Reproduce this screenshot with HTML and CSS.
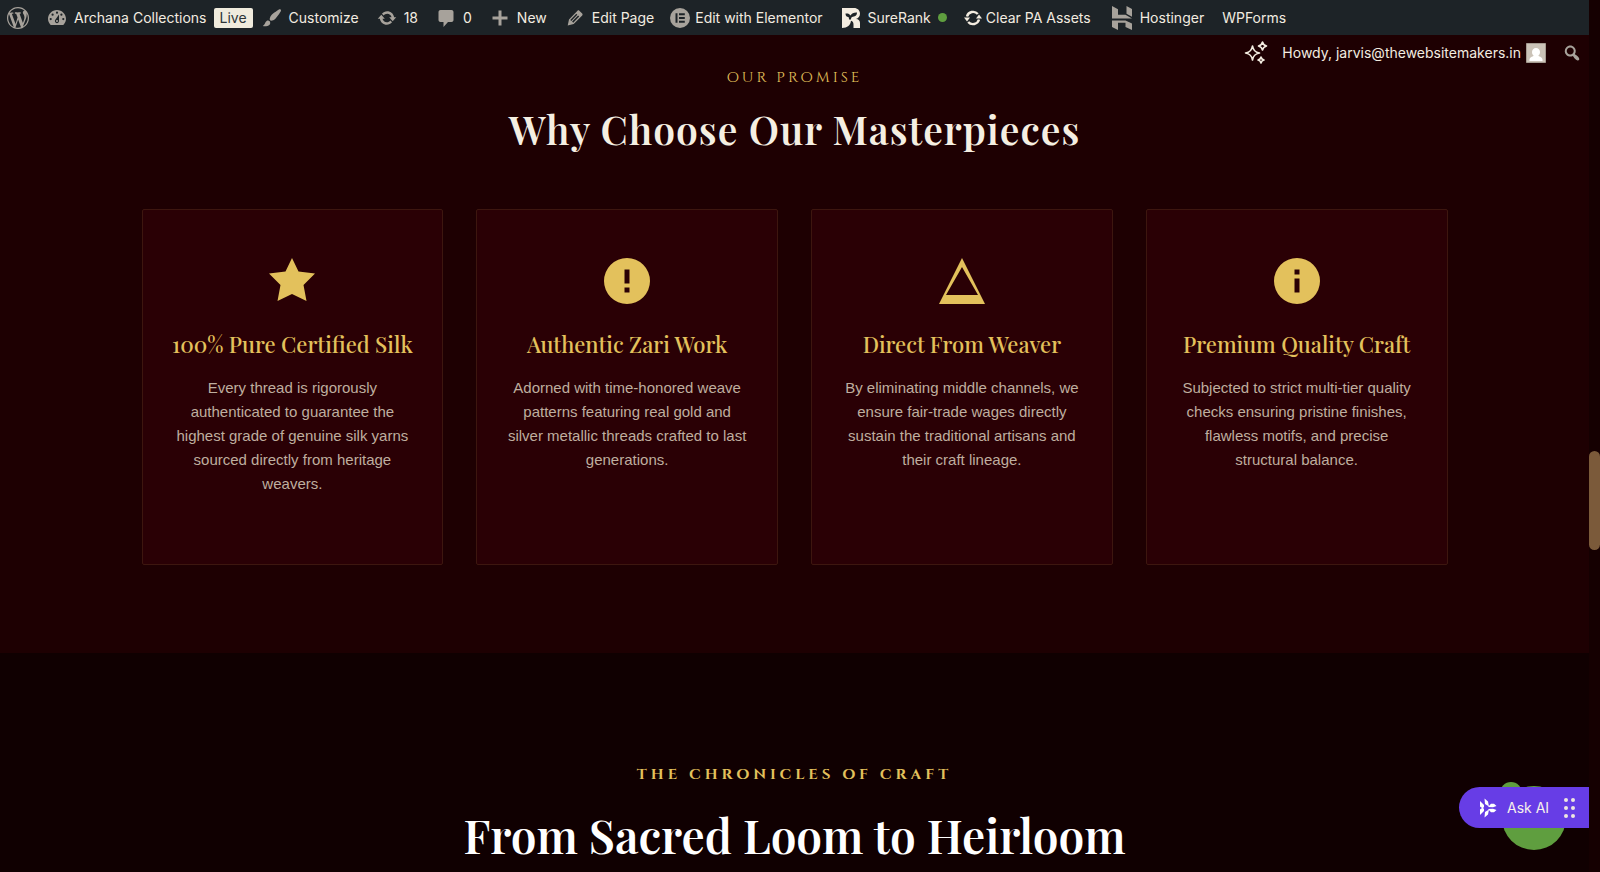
FILE: index.html
```html
<!DOCTYPE html>
<html lang="en">
<head>
    <meta charset="UTF-8">
    <meta name="viewport" content="width=device-width, initial-scale=1.0">
    <title>Archana Collections</title>
    <link rel="stylesheet" href="styles.css">
</head>
<body>

<header class="adminbar">
    <nav class="adminbar-main">
        <a href="#" class="wp-logo" aria-label="About WordPress"><svg class="icon icon-wp" viewBox="0 0 20 20"><path d="M20 10c0-5.51-4.49-10-10-10C4.48 0 0 4.49 0 10c0 5.52 4.48 10 10 10 5.51 0 10-4.48 10-10zM7.78 15.37L4.37 6.22c.55-.02 1.17-.08 1.17-.08.5-.06.44-1.13-.06-1.11 0 0-1.45.11-2.37.11-.18 0-.37 0-.58-.01C4.12 2.69 6.87 1.11 10 1.11c2.33 0 4.45.87 6.05 2.34-.68-.11-1.65.39-1.65 1.58 0 .74.45 1.36.9 2.1.35.61.55 1.36.55 2.46 0 1.49-1.4 5-1.4 5l-3.03-8.37c.54-.02.82-.17.82-.17.5-.05.44-1.25-.06-1.22 0 0-1.44.12-2.38.12-.87 0-2.33-.12-2.33-.12-.5-.03-.56 1.2-.06 1.22l.92.08 1.26 3.41zM17.41 10c.24-.64.74-1.87.43-4.25.7 1.29 1.05 2.71 1.05 4.25 0 3.29-1.73 6.24-4.4 7.78.97-2.59 1.94-5.2 2.92-7.78zM6.1 18.09C3.12 16.65 1.11 13.53 1.11 10c0-1.3.23-2.48.72-3.59C3.25 10.3 4.67 14.2 6.1 18.09zm4.03-6.63l2.58 6.98c-.86.29-1.76.45-2.71.45-.79 0-1.57-.11-2.29-.33.81-2.38 1.62-4.74 2.42-7.1z"/></svg></a>
        <a href="#" class="site-name"><svg class="icon" viewBox="0 0 20 20"><path fill-rule="evenodd" d="M3.76 17h12.48C17.34 15.6 19 13.9 19 11c0-5-4-9-9-9s-9 4-9 9c0 2.9 1.66 4.6 2.76 6zM10 3.6a1.1 1.1 0 1 1 0 2.2 1.1 1.1 0 0 1 0-2.2zM5.6 5.6a1.1 1.1 0 1 1 0 2.2 1.1 1.1 0 0 1 0-2.2zm8.8 0a1.1 1.1 0 1 1 0 2.2 1.1 1.1 0 0 1 0-2.2zM8.5 11.5L12 6.5v6.6c0 1.2-.9 2.2-2 2.2s-2.1-1-2.1-2.2c0-.6.2-1.2.6-1.6zM3.7 10a1.1 1.1 0 1 1 0 2.2 1.1 1.1 0 0 1 0-2.2zm12.6 0a1.1 1.1 0 1 1 0 2.2 1.1 1.1 0 0 1 0-2.2zM11 13a1 1 0 1 0-2 0 1 1 0 0 0 2 0z"/></svg>Archana Collections<span class="badge-live">Live</span></a>
        <a href="#"><svg class="icon" viewBox="0 0 20 20"><path d="M18.93 2.97s.27-.8-.31-1.36c-.53-.52-1.22-.24-1.22-.24-.61.3-6.36 4.07-8.27 6.17-.86.96-2.06 3.79-1.09 4.82.92.98 3.96-.17 4.79-1 2.06-2.06 5.81-7.77 6.1-8.39zM.8 18.05c2.37-1.56 2.06-3.81 3.83-5.04.93-.65 2.22-.62 3.08.29.63.67.8 2.57-.16 3.46-1.57 1.45-4.6 1.95-6.75 1.29z"/></svg>Customize</a>
        <a href="#"><svg class="icon" viewBox="0 0 20 20"><path d="M10.2 3.28c3.53 0 6.43 2.61 6.92 6h2.08l-3.5 4-3.5-4h2.32c-.45-1.97-2.21-3.45-4.32-3.45-1.45 0-2.73.71-3.54 1.78L4.95 5.66C6.23 4.2 8.11 3.28 10.2 3.28zm-.4 13.44c-3.52 0-6.43-2.61-6.92-6H.8l3.5-4c1.17 1.33 2.33 2.67 3.5 4H5.48c.45 1.97 2.21 3.45 4.32 3.45 1.45 0 2.73-.71 3.54-1.78l1.71 1.95c-1.28 1.46-3.15 2.38-5.25 2.38z"/></svg>18</a>
        <a href="#"><svg class="icon" viewBox="0 0 20 20"><path d="M4.500 2h11c1.100 0 2 .9 2 2v8c0 1.100-.9 2-2 2h-3.500l-4.500 5v-5H4.500c-1.100 0-2-.9-2-2V4c0-1.100.9-2 2-2z"/></svg>0</a>
        <a href="#"><svg class="icon" viewBox="0 0 20 20"><path d="M17.500 8.500v3h-6v6h-3v-6h-6v-3h6v-6h3v6z"/></svg>New</a>
        <a href="#"><svg class="icon" viewBox="0 0 20 20"><path d="M14.300 2.700l2.900 2.900c.5.5.5 1.300 0 1.800l-8.500 8.700-6 1.400 1.300-6.100 8.500-8.700c.4-.4 1.300-.5 1.800 0zm-3 3.100l-6 6.100 1 1 6-6.100zm-3.100 8.900l6-6.100-1.100-1.100-6 6.100z"/></svg>Edit Page</a>
        <a href="#" class="elementor"><svg class="icon" viewBox="0 0 20 20"><path fill-rule="evenodd" d="M10 0a10 10 0 1 1 0 20 10 10 0 0 1 0-20zM5.500 5.200v9.600h2V5.200zM9 5.200v2h5.800v-2zM9 9v2h5.800V9zM9 12.800v2h5.800v-2z"/></svg>Edit with Elementor</a>
        <a href="#"><svg class="icon icon-light" viewBox="0 0 20 20"><path fill-rule="evenodd" d="M1 0h12c3.500 0 6 2.400 6 5.700 0 2.600-1.600 4.600-4 5.300 2.600 0 4 1.800 4 4v5h-6.500v-3.500c0-2-.8-3.200-2.500-3.700-.5 4.200-3.500 7.200-9 7.200zM8 11.500h2c0-1.700.6-2.500 2-2.700 2.700-.3 4-1.800 4-4.300-3-.2-5.300.7-6.500 3C8.600 5.800 6.900 5.200 4.500 5.500c0 2.300 1.200 3.500 3.200 3.700.3.800.3 1.500.3 2.300z"/></svg>SureRank<span class="status-dot"></span></a>
        <a href="#" class="clear-assets"><svg class="icon icon-light" viewBox="0 0 20 20"><path fill="none" stroke="currentColor" stroke-width="2.400" d="M4 8.500A6.300 6.300 0 0 1 14.800 6M16 11.500A6.300 6.300 0 0 1 5.200 14"/><path d="M19 10.500h-6l3-4zM1 9.500h6l-3 4z"/></svg>Clear PA Assets</a>
        <a href="#"><svg class="icon icon-host" viewBox="0 0 22 24"><path d="M1 0l6 3.200v5.600h7.500L21 12.400H1zM15.500 0L21 3v7.800l-5.500-3zM1 14.500h13.500l6.500 3V24l-6.500-3v-4.300H7V24l-6-3z"/></svg>Hostinger</a>
        <a href="#">WPForms</a>
    </nav>
    <nav class="adminbar-user">
        <a href="#" class="assistant" aria-label="AI assistant"><svg class="icon-sparkle" viewBox="0 0 24 24" fill="none" stroke="currentColor" stroke-width="1.600" stroke-linejoin="round"><path d="M8.500 5c.8 4.500 2.500 6.200 7 7-4.500.8-6.200 2.500-7 7-.8-4.500-2.500-6.200-7-7 4.500-.8 6.200-2.500 7-7zM18.500 1c.5 2.300 1.500 3.300 4 4-2.500.7-3.500 1.700-4 4-.5-2.300-1.500-3.300-4-4 2.500-.7 3.500-1.700 4-4zM17 16c.4 1.900 1.200 2.600 3 3-1.800.4-2.600 1.200-3 3-.4-1.800-1.200-2.600-3-3 1.800-.4 2.600-1.100 3-3z"/></svg></a>
        <a href="#" class="account">Howdy, jarvis@thewebsitemakers.in<svg class="avatar" viewBox="0 0 20 20"><path fill="#cbc3b8" stroke="#a49b91" d="M.5.5h19v19H.5z"/><path fill="#fff" d="M10 5c2.400 0 4 1.700 4 4 0 1.600-.7 2.900-1.700 3.600.2 1.100 3.700 1 4.200 3.900V18h-13v-1.500c.5-2.900 4-2.800 4.200-3.900C6.700 11.900 6 10.600 6 9c0-2.300 1.600-4 4-4z"/></svg></a>
        <a href="#" class="search" aria-label="Search"><svg class="icon" viewBox="0 0 20 20"><path d="M12.140 4.180c1.870 1.870 2.110 4.750.72 6.890.12.1.22.21.36.31.2.16.47.36.81.59.34.24.56.39.66.47.42.31.73.57.94.78.32.32.6.65.84 1 .25.35.44.69.59 1.040.14.350.21.680.18 1-.02.32-.14.59-.36.81s-.49.34-.81.36c-.31.02-.65-.04-.99-.19-.35-.14-.7-.34-1.040-.59-.35-.24-.68-.52-1-.84-.21-.21-.47-.52-.77-.93-.1-.13-.25-.35-.47-.66-.22-.32-.4-.57-.56-.78-.16-.2-.29-.35-.44-.5-2.070 1.090-4.690.760-6.440-.98-2.140-2.150-2.140-5.640 0-7.780 2.150-2.150 5.630-2.150 7.780 0zm-1.410 6.360c1.360-1.370 1.360-3.580 0-4.950-1.370-1.370-3.590-1.370-4.950 0-1.370 1.370-1.370 3.580 0 4.950 1.360 1.370 3.580 1.370 4.950 0z"/></svg></a>
    </nav>
</header>

<main>
    <section class="promise">
        <p class="eyebrow">Our Promise</p>
        <h2 class="promise-title">Why Choose Our Masterpieces</h2>
        <div class="cards">
            <article class="card">
                <svg class="card-icon" viewBox="0 0 46 46"><path d="M23 0l6.500 13.500L46 15.500 34.500 27 37.500 43 23 36 8.500 43l3-16L0 15.500l16.500-2z"/></svg>
                <h3>100% Pure Certified Silk</h3>
                <p>Every thread is rigorously authenticated to guarantee the highest grade of genuine silk yarns sourced directly from heritage weavers.</p>
            </article>
            <article class="card">
                <svg class="card-icon" viewBox="0 0 46 46"><path fill-rule="evenodd" d="M23 0a23 23 0 1 1 0 46 23 23 0 0 1 0-46zM20.500 11.500v14h5v-14zM20.500 29.500v5h5v-5z"/></svg>
                <h3>Authentic Zari Work</h3>
                <p>Adorned with time-honored weave patterns featuring real gold and silver metallic threads crafted to last generations.</p>
            </article>
            <article class="card">
                <svg class="card-icon" viewBox="0 0 46 46"><path fill-rule="evenodd" d="M23 0l23 46H0zM23 9L7 37h32z"/></svg>
                <h3>Direct From Weaver</h3>
                <p>By eliminating middle channels, we ensure fair-trade wages directly sustain the traditional artisans and their craft lineage.</p>
            </article>
            <article class="card">
                <svg class="card-icon" viewBox="0 0 46 46"><path fill-rule="evenodd" d="M23 0a23 23 0 1 1 0 46 23 23 0 0 1 0-46zM20.500 11.500v5h5v-5zM20.500 20.500v14h5v-14z"/></svg>
                <h3>Premium Quality Craft</h3>
                <p>Subjected to strict multi-tier quality checks ensuring pristine finishes, flawless motifs, and precise structural balance.</p>
            </article>
        </div>
    </section>

    <section class="chronicles">
        <p class="eyebrow eyebrow-bold">The Chronicles of Craft</p>
        <h2 class="chronicles-title">From Sacred Loom to Heirloom</h2>
    </section>
</main>

<div class="chat-bubble"></div>
<button class="ask-ai">
    <svg class="ask-logo" viewBox="0 0 18 20"><path d="M1 3l4 4v2l-1 1 1 1v2l-4 4v-5.500L3 10 1 8.500zM5.500 .5L9 3.500l1 5L6 6zM5.500 19.500L9 16.500l1-5L6 14zM9 9l3-3.200h3L17.500 8 14 9.300zM9 11l3 3.200h3l2.500-2.200L14 10.700z"/></svg>
    Ask AI
    <svg class="ask-grip" viewBox="0 0 12 20"><circle cx="2" cy="2" r="2"/><circle cx="9" cy="2" r="2"/><circle cx="2" cy="10" r="2"/><circle cx="9" cy="10" r="2"/><circle cx="2" cy="18" r="2"/><circle cx="9" cy="18" r="2"/></svg>
</button>

<div class="scroll-track"><div class="scroll-thumb"></div></div>

</body>
</html>
```
FILE: styles.css
```css
* {
    box-sizing: border-box;
}
body {
    margin: 0;
    height: 100vh;
    padding-right: 11px;
    overflow: hidden;
    background: #100001;
    color: #f5efe2;
    font-family: "Liberation Sans", Arial, sans-serif;
}
h2, h3, p {
    margin: 0;
}

/* Admin bar */
.adminbar {
    position: relative;
    height: 35px;
    background: #1d2327;
    font-family: Inter, sans-serif;
    font-size: 14px;
}
.adminbar a {
    display: flex;
    align-items: center;
    gap: 7px;
    padding: 0 9px;
    color: #f3ece0;
    text-decoration: none;
    white-space: nowrap;
}
.adminbar-main {
    display: flex;
    height: 35px;
}
.adminbar .wp-logo {
    padding-left: 7px;
}
.adminbar .site-name {
    padding-right: 0;
}
.adminbar .elementor {
    gap: 5px;
    padding-left: 7px;
}
.adminbar .clear-assets {
    gap: 3px;
    padding: 0 11px 0 7px;
}
.icon {
    width: 20px;
    height: 20px;
    flex: none;
    color: #a7a29b;
    fill: currentColor;
}
.icon-wp {
    width: 22px;
    height: 22px;
}
.icon-host {
    width: 22px;
    height: 24px;
}
.icon-light {
    color: #f3ece0;
}
.badge-live {
    padding: 0 6px;
    border-radius: 2px;
    background: #f0ebdd;
    color: #2c3338;
    line-height: 20px;
}
.status-dot {
    width: 9px;
    height: 9px;
    border-radius: 50%;
    background: #5f9e3f;
}
.adminbar-user {
    display: flex;
    position: absolute;
    top: 35px;
    right: 0;
    height: 35px;
}
.adminbar .assistant {
    padding-right: 5px;
}
.adminbar .account {
    gap: 5px;
}
.adminbar .search {
    padding: 0 7px;
}
.icon-sparkle {
    width: 24px;
    height: 24px;
}
.avatar {
    width: 20px;
    height: 20px;
}

/* Our promise */
.promise {
    padding: 32px 40px 88px;
    background: #1e0002;
    text-align: center;
}
.eyebrow {
    color: #e3c15c;
    font-family: Cinzel, "Liberation Serif", serif;
    font-size: 15px;
    line-height: 22px;
    letter-spacing: 3px;
    text-transform: uppercase;
}
.eyebrow-bold {
    font-weight: 600;
    letter-spacing: 4px;
}
.promise-title {
    margin-top: 14px;
    font-family: "Playfair Display", "Liberation Serif", serif;
    font-size: 39px;
    font-weight: 600;
    line-height: 52px;
    letter-spacing: 1px;
}
.cards {
    display: grid;
    grid-template-columns: repeat(4, minmax(0, 1fr));
    gap: 33px;
    max-width: 1306px;
    margin: 54px auto 0;
}
.card {
    padding: 48px 28px 68px;
    border: 1px solid #3d160f;
    border-radius: 2px;
    background: #2a0005;
}
.card-icon {
    display: block;
    width: 46px;
    height: 46px;
    margin: 0 auto;
    fill: #e3c15c;
}
.card h3 {
    margin: 24px 0 16px;
    color: #e3c15c;
    font-family: "Playfair Display", "Liberation Serif", serif;
    font-size: 22px;
    font-weight: 500;
    line-height: 32px;
}
.card p {
    color: #bfae9f;
    font-size: 15px;
    font-weight: 300;
    line-height: 24px;
}

/* Chronicles of craft */
.chronicles {
    padding: 111px 40px;
    text-align: center;
}
.chronicles-title {
    margin-top: 19px;
    color: #fff;
    font-family: "Playfair Display", "Liberation Serif", serif;
    font-size: 46px;
    font-weight: 600;
    line-height: 60px;
}

/* Floating widgets */
.chat-bubble {
    position: fixed;
    right: 34px;
    bottom: 22px;
    width: 64px;
    height: 64px;
    border-radius: 50%;
    background: #5f9e3f;
}
.chat-bubble::before {
    content: "";
    position: absolute;
    top: -4px;
    left: -2px;
    width: 22px;
    height: 22px;
    border-radius: 50%;
    background: #5f9e3f;
}
.ask-ai {
    display: flex;
    align-items: center;
    position: fixed;
    right: 11px;
    bottom: 44px;
    width: 130px;
    height: 41px;
    padding: 0 13px 0 20px;
    border: none;
    border-radius: 21px 0 0 21px;
    background: #673de6;
    color: #f6f1ea;
    font-family: Inter, sans-serif;
    font-size: 14px;
    white-space: nowrap;
    cursor: pointer;
}
.ask-logo {
    width: 18px;
    height: 20px;
    margin-right: 10px;
    fill: #fff;
}
.ask-grip {
    width: 12px;
    height: 20px;
    margin-left: auto;
    fill: #eee6e0;
}

/* Page scrollbar */
.scroll-track {
    position: fixed;
    top: 0;
    right: 0;
    bottom: 0;
    width: 11px;
    background: #150001;
}
.scroll-thumb {
    height: 99px;
    margin-top: 451px;
    border-radius: 6px;
    background: #7b5a3a;
}
```
